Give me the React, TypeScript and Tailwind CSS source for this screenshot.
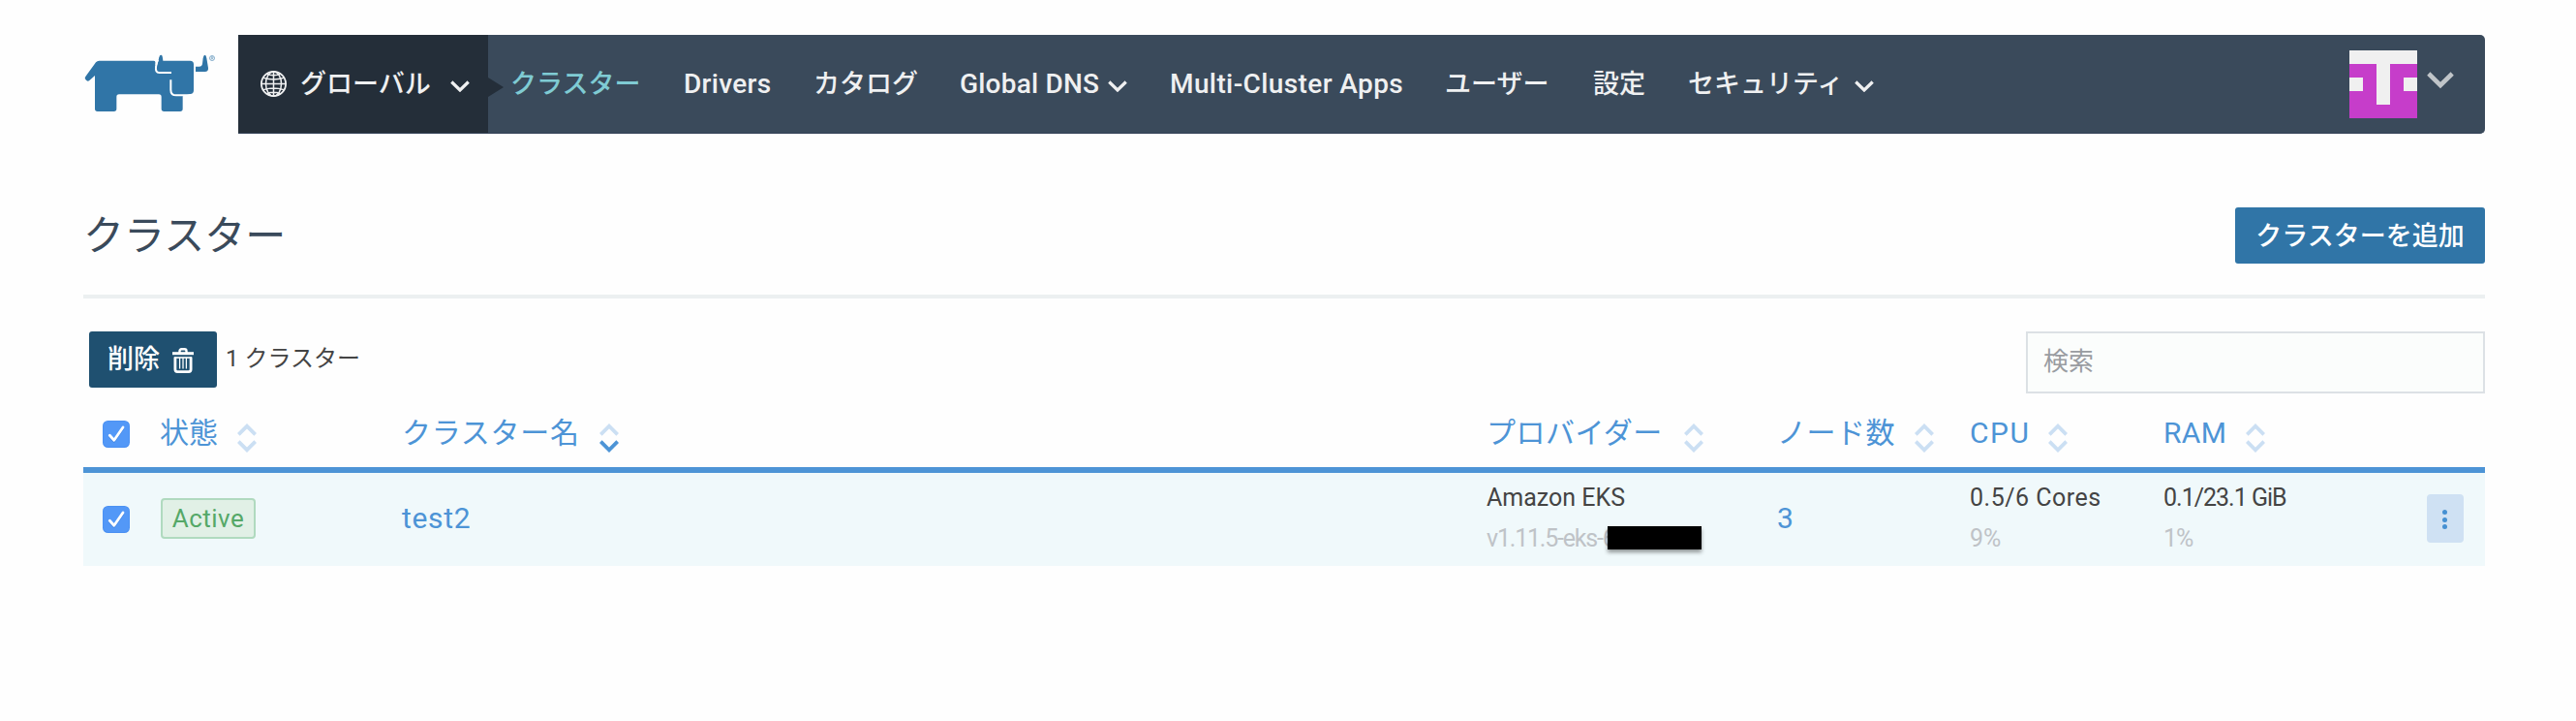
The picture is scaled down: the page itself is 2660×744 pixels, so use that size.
import { Fragment, type ReactNode } from 'react';

function Logo() {
  return (
    <svg viewBox="0 0 450 225" className="block h-[75px] w-[150px]" fill="#3075a7">
      <path d="M67 38 H236 Q243 38 248 40 L252 30 Q254 20 259 20 Q263 20 264 30 L265 38 H349 Q360 38 360 49 V130 Q360 141 349 141 L326 148 V187 Q326 195 318 195 H268 Q260 195 260 187 V150 Q260 142 252 142 H129 Q121 142 121 150 V187 Q121 195 113 195 H62 Q54 195 54 187 V84 L37 99 Q32 103 28 99 L25 96 Q21 92 25 87 L57 43 Q61 38 67 38 Z" />
      <path d="M250 24 L243 57 Q241 75 253 75 H291 M289 97 V128 Q289 145 306 145 H362" fill="none" stroke="#fff" strokeWidth="6" />
      <path d="M236 36 H252 L246 52 L241 50 Q243 40 236 36 Z" fill="#fff" />
      <path d="M366 56 H377 Q386 56 387 47 L389 30 Q391 20 395 20 Q398 20 400 30 L405 60 Q406 72 395 72 H366 Z" />
      <circle cx="417" cy="30" r="7.5" fill="none" stroke="#5a91b9" strokeWidth="2.2" />
      <path d="M415 34 V26 H418 Q420 26 420 28.5 Q420 30 417 30 L420 34" fill="none" stroke="#5a91b9" strokeWidth="1.8" />
    </svg>
  );
}

function Globe() {
  return (
    <svg viewBox="0 0 27 27" className="block size-[27px] shrink-0" fill="none" stroke="#eff0f1" strokeWidth="1.5">
      <circle cx="13.5" cy="13.5" r="12.6" strokeWidth="1.8" />
      <ellipse cx="13.5" cy="13.5" rx="8" ry="12.6" />
      <path d="M13.5 1V26M1 13.5H26M3 7.4Q13.5 10.4 24 7.4M3 19.6Q13.5 16.6 24 19.6M6.5 3.4Q13.5 6 20.5 3.4M6.5 23.6Q13.5 21 20.5 23.6" />
    </svg>
  );
}

function NavChevron() {
  return (
    <svg viewBox="0 0 20 12" className="mt-1 block h-3 w-5 shrink-0" fill="none" stroke="#eff0f1" strokeWidth="3.2">
      <path d="M1.3 1.5 L10 10 L18.7 1.5" />
    </svg>
  );
}

function Trash() {
  return (
    <svg viewBox="0 0 22 26" className="mt-[2px] block h-[26px] w-[22px] shrink-0" fill="none" stroke="#fff">
      <path d="M0 5.7H22" strokeWidth="3" />
      <path d="M7.5 5V3.2Q7.5 1.3 9.5 1.3H12.5Q14.5 1.3 14.5 3.2V5" strokeWidth="2.4" />
      <path d="M2.9 9.5V22.3Q2.9 24.6 5.2 24.6H16.8Q19.1 24.6 19.1 22.3V9.5" strokeWidth="2.8" />
      <path d="M2 10H20" strokeWidth="1.6" />
      <path d="M7.6 10V21.5M11 10V21.5M14.4 10V21.5" strokeWidth="1.3" />
    </svg>
  );
}

function Sort({ active = false }: { active?: boolean }) {
  return (
    <svg viewBox="0 0 20 30" className="mt-[10px] block h-[30px] w-5 shrink-0" fill="none" strokeWidth="3.8">
      <path d="M1.3 11.4 L10 2.7 L18.7 11.4" stroke="#cbdff3" />
      <path d="M1.3 18.6 L10 27.3 L18.7 18.6" stroke={active ? '#4d94d6' : '#cbdff3'} />
    </svg>
  );
}

function Checkbox() {
  return (
    <svg viewBox="0 0 28 28" className="block size-7 shrink-0">
      <rect width="28" height="28" rx="5.5" fill="#4a90f2" />
      <rect x="0.7" y="0.7" width="26.6" height="26.2" rx="5" fill="#5398f7" />
      <path d="M7.3 16.3 L11.8 21.3 L21 8" fill="none" stroke="#2f6fcc" strokeOpacity="0.5" strokeWidth="2.6" strokeLinecap="round" strokeLinejoin="round" />
      <path d="M7.3 15.2 L11.8 20.2 L21 7" fill="none" stroke="#fff" strokeWidth="2.8" strokeLinecap="round" strokeLinejoin="round" />
    </svg>
  );
}

function Avatar() {
  const rows = ['00000', '11011', '01010', '11011', '11111'];
  return (
    <div className="grid size-[70px] shrink-0 grid-cols-5 grid-rows-5">
      {rows.map((row, r) => (
        <Fragment key={r}>
          {row.split('').map((c, i) => (
            <div key={i} className={c === '1' ? 'bg-[#c63dca]' : 'bg-[#f0f0f0]'} />
          ))}
        </Fragment>
      ))}
    </div>
  );
}

const nav: { label: string; cell: string; text: string; menu?: boolean }[] = [
  { label: 'クラスター', cell: 'w-[179px]', text: 'text-[27px] text-[#7fcbd3]' },
  { label: 'Drivers', cell: 'w-[134px]', text: 'text-[28px] tracking-[0.3px]' },
  { label: 'カタログ', cell: 'w-[151px]', text: 'text-[27px]' },
  { label: 'Global DNS', cell: 'w-[217px]', text: 'w-[153px] text-[28px] tracking-[0.2px]', menu: true },
  { label: 'Multi-Cluster Apps', cell: 'w-[284px]', text: 'text-[28px] tracking-[0.4px]' },
  { label: 'ユーザー', cell: 'w-[153px]', text: 'text-[27px]' },
  { label: '設定', cell: 'w-[98px]', text: 'text-[27px]' },
  { label: 'セキュリティ', cell: 'w-[220px]', text: 'w-[172px] text-[27px]', menu: true },
];

function Head({ label, cell, width, active, tracking = '' }: { label: string; cell: string; width: string; active?: boolean; tracking?: string }) {
  return (
    <div className={`flex shrink-0 items-center ${cell}`}>
      <span className={`${width} ${tracking} shrink-0 whitespace-nowrap`}>{label}</span>
      <Sort active={active} />
    </div>
  );
}

function TwoLine({ cell, top, bottom }: { cell: string; top: ReactNode; bottom: ReactNode }) {
  return (
    <div className={`text-[25px] leading-[42px] whitespace-nowrap ${cell}`}>
      <div className="text-[#444444]">{top}</div>
      <div className="text-[#bfc3c7]">{bottom}</div>
    </div>
  );
}

export default function App() {
  return (
    <div lang="ja" className="h-[744px] w-[2660px] overflow-hidden bg-[#fefefe] pt-9 font-['Roboto','Noto_Sans_CJK_JP',sans-serif]">
      <header className="flex h-[102px] w-[2566px] pl-20">
        <div className="w-[166px] shrink-0 pt-[14px]">
          <Logo />
        </div>
        <div className="flex flex-1 items-center overflow-hidden rounded-r-[5px] border-b border-[#354258] bg-[#3a4a5b] font-medium text-[#eff0f1]">
          <div className="flex h-full w-[258px] shrink-0 items-center bg-[#242e39] pl-[23px]">
            <Globe />
            <span className="ml-[14px] w-[155px] text-[27px] leading-[40px] whitespace-nowrap">グローバル</span>
            <NavChevron />
          </div>
          <svg viewBox="0 0 16 20" className="mt-[6px] block h-5 w-4 shrink-0" fill="#242e39">
            <path d="M0 0 L16 10 L0 20 Z" />
          </svg>
          <nav className="flex flex-1 items-center pl-[7px]">
            {nav.map((n) => (
              <a key={n.label} className={`flex shrink-0 items-center ${n.cell}`}>
                <span className={`shrink-0 leading-[40px] whitespace-nowrap ${n.text}`}>{n.label}</span>
                {n.menu && <NavChevron />}
              </a>
            ))}
          </nav>
          <Avatar />
          <svg viewBox="0 0 28 18" className="mr-8 mb-[7px] ml-[10.5px] block h-[18px] w-7 shrink-0" fill="none" stroke="#c0c5c9" strokeWidth="4.6">
            <path d="M1.8 2 L14 14 L26.2 2" />
          </svg>
        </div>
      </header>

      <main className="ml-[86px] w-[2480px]">
        <div className="flex h-[170px] items-start justify-between border-b-4 border-[#ecf0f1] pt-[76px]">
          <h1 className="text-[42px] leading-[60px] text-[#3a4a5b]">クラスター</h1>
          <button className="h-[58px] w-[258px] rounded-[3px] bg-[#3075a7] pt-[2px] text-[27px] leading-[40px] font-medium text-white">クラスターを追加</button>
        </div>

        <div className="flex h-[98px] items-start justify-between pt-[34px]">
          <div className="flex items-center pl-[6px]">
            <button className="flex h-[58px] w-[132px] items-center rounded-[3px] bg-[#1f5070] pl-[19px] text-[27px] leading-[40px] font-medium text-white">
              <span className="w-[66.5px] text-left whitespace-nowrap">削除</span>
              <Trash />
            </button>
            <span className="mb-[2px] ml-[9px] text-[24px] leading-[40px] whitespace-nowrap text-[#444444]">1 クラスター</span>
          </div>
          <div className="h-16 w-[474px] border-2 border-[#dce1e5] bg-[#fbfdfc] pt-[9px] pl-[16px] text-[26px] leading-[40px] text-[#999ca1]">検索</div>
        </div>

        <div className="flex h-[82px] items-center border-b-[6px] border-[#4d94d6] pt-[6px] text-[30px] leading-[40px] text-[#4d94d6]">
          <div className="w-[79px] shrink-0 pt-[2px] pl-5"><Checkbox /></div>
          <Head label="状態" cell="w-[250px]" width="w-[79.5px]" />
          <Head label="クラスター名" cell="w-[1120px]" width="w-[203.5px]" active tracking="tracking-[0.7px]" />
          <Head label="プロバイダー" cell="w-[300px]" width="w-[204px]" tracking="tracking-[0.5px]" />
          <Head label="ノード数" cell="w-[199px]" width="w-[142px]" tracking="tracking-[0.5px]" />
          <Head label="CPU" cell="w-[200px]" width="w-[81px]" tracking="tracking-[1.5px]" />
          <Head label="RAM" cell="w-[200px]" width="w-[84.5px]" tracking="tracking-[0.3px]" />
        </div>

        <div className="flex h-24 items-center bg-[#f0f9fb] text-[30px] leading-[40px] text-[#4d94d6]">
          <div className="w-20 shrink-0 pl-5"><Checkbox /></div>
          <div className="w-[249px] shrink-0">
            <span className="mb-[2px] flex h-[42px] w-[98px] items-center justify-center rounded-[4px] border-2 border-[#b0dabf] bg-[#e1f0e6] text-[26px] tracking-[0.5px] text-[#55a868]">Active</span>
          </div>
          <div className="mb-[3px] w-[1120px] shrink-0 tracking-[0.7px]">test2</div>
          <TwoLine
            cell="mb-[2px] w-[300px] shrink-0"
            top={<span>Amazon EKS</span>}
            bottom={
              <span className="relative inline-block w-[222px]">
                <span className="tracking-[-1.2px]">v1.11.5-eks-6</span>
                <span className="absolute top-[8px] left-[124.5px] h-6 w-[97px] bg-black shadow-[0_3px_4px_rgba(0,0,0,0.4)]" />
              </span>
            }
          />
          <div className="mb-[3px] w-[199px] shrink-0">3</div>
          <TwoLine cell="mb-[2px] w-[200px] shrink-0" top={<span className="tracking-[0.5px]">0.5/6 Cores</span>} bottom="9%" />
          <TwoLine cell="mb-[2px] w-[200px] shrink-0" top={<span className="tracking-[-1px]">0.1/23.1 GiB</span>} bottom={<span className="tracking-[-1px]">1%</span>} />
          <div className="flex flex-1 justify-end pr-[22px]">
            <button className="mb-[2px] flex h-[50px] w-[38px] flex-col items-center justify-center gap-[2.5px] rounded-[4px] bg-[#cfe1f3] pt-[2px] pr-[2px]">
              <i className="size-[5px] rounded-full bg-[#4590d2]" />
              <i className="size-[5px] rounded-full bg-[#4590d2]" />
              <i className="size-[5px] rounded-full bg-[#4590d2]" />
            </button>
          </div>
        </div>
      </main>
    </div>
  );
}
